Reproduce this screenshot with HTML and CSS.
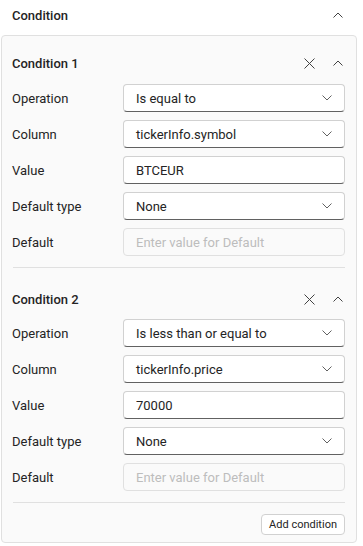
FILE: index.html
```html
<!DOCTYPE html>
<html lang="en">
<head>
  <meta charset="UTF-8" />
  <meta name="viewport" content="width=device-width, initial-scale=1.0"/>
  <title>Condition</title>
  <link rel="stylesheet" href="styles.css">
</head>
<body>
  <div class="section-header">
    <span class="section-title">Condition</span>
    <svg class="chevron-up" width="10" height="6" viewBox="0 0 10 6"><path d="M0.5 5.5 L5 1 L9.5 5.5" /></svg>
  </div>

  <div class="panel">
    <!-- CONDITION 1 -->
    <div class="condition">
      <div class="condition-head">
        <span class="condition-title">Condition 1</span>
        <div class="actions">
          <svg class="close" width="11" height="11" viewBox="0 0 11 11"><path d="M0.5 0.5 L10.5 10.5 M10.5 0.5 L0.5 10.5" /></svg>
          <svg class="chevron-up" width="10" height="6" viewBox="0 0 10 6"><path d="M0.5 5.5 L5 1 L9.5 5.5" /></svg>
        </div>
      </div>
      <div class="fields">
        <label>Operation</label>
        <div class="dropdown"><span>Is equal to</span><svg width="10" height="6" viewBox="0 0 10 6"><path d="M0.5 0.5 L5 5 L9.5 0.5" /></svg></div>
        <label>Column</label>
        <div class="dropdown"><span>tickerInfo.symbol</span><svg width="10" height="6" viewBox="0 0 10 6"><path d="M0.5 0.5 L5 5 L9.5 0.5" /></svg></div>
        <label>Value</label>
        <input class="text-input" type="text" value="BTCEUR" />
        <label>Default type</label>
        <div class="dropdown"><span>None</span><svg width="10" height="6" viewBox="0 0 10 6"><path d="M0.5 0.5 L5 5 L9.5 0.5" /></svg></div>
        <label>Default</label>
        <input class="text-input" type="text" placeholder="Enter value for Default" disabled />
      </div>
    </div>

    <div class="divider"></div>

    <!-- CONDITION 2 -->
    <div class="condition second">
      <div class="condition-head">
        <span class="condition-title">Condition 2</span>
        <div class="actions">
          <svg class="close" width="11" height="11" viewBox="0 0 11 11"><path d="M0.5 0.5 L10.5 10.5 M10.5 0.5 L0.5 10.5" /></svg>
          <svg class="chevron-up" width="10" height="6" viewBox="0 0 10 6"><path d="M0.5 5.5 L5 1 L9.5 5.5" /></svg>
        </div>
      </div>
      <div class="fields">
        <label>Operation</label>
        <div class="dropdown"><span>Is less than or equal to</span><svg width="10" height="6" viewBox="0 0 10 6"><path d="M0.5 0.5 L5 5 L9.5 0.5" /></svg></div>
        <label>Column</label>
        <div class="dropdown"><span>tickerInfo.price</span><svg width="10" height="6" viewBox="0 0 10 6"><path d="M0.5 0.5 L5 5 L9.5 0.5" /></svg></div>
        <label>Value</label>
        <input class="text-input" type="text" value="70000" />
        <label>Default type</label>
        <div class="dropdown"><span>None</span><svg width="10" height="6" viewBox="0 0 10 6"><path d="M0.5 0.5 L5 5 L9.5 0.5" /></svg></div>
        <label>Default</label>
        <input class="text-input" type="text" placeholder="Enter value for Default" disabled />
      </div>
    </div>

    <div class="divider"></div>

    <div class="panel-footer">
      <button class="add-btn">Add condition</button>
    </div>
  </div>
</body>
</html>
```

FILE: styles.css
```css
body {
  font-family: Roboto, "Noto Sans", sans-serif;
  font-size: 13px;
  color: #242424;
  background: white;
  margin: 0;
  padding: 0;
}
svg path {
  fill: none;
  stroke: #424242;
  stroke-width: 1;
}
.section-header {
  display: flex;
  align-items: center;
  justify-content: space-between;
  height: 30px;
  padding: 0 20px 0 12px;
  margin-bottom: 5px;
}
.section-title,
.condition-title {
  font-weight: 500;
}
.panel {
  width: 356px;
  box-sizing: border-box;
  margin-left: 1px;
  background: #fafafa;
  border: 1px solid #e0e0e0;
  border-radius: 4px;
  padding: 0 11px 7px;
}
.condition {
  padding-top: 11px;
}
.condition.second {
  padding-top: 15px;
}
.condition-head {
  display: flex;
  align-items: center;
  justify-content: space-between;
  height: 32px;
  margin-bottom: 5px;
}
.condition.second .condition-head {
  margin-bottom: 4px;
}
.condition-title {
  margin-left: -1px;
}
.actions {
  display: flex;
  align-items: center;
  gap: 18px;
  margin-right: 2px;
}
.fields {
  display: grid;
  grid-template-columns: 110px 1fr;
  row-gap: 8px;
  align-items: center;
}
.fields label {
  margin-left: -1px;
}
.dropdown,
.text-input {
  box-sizing: border-box;
  height: 28px;
  background: white;
  border: 1px solid #d1d1d1;
  border-bottom-color: #616161;
  border-radius: 4px;
  font: inherit;
  color: #242424;
  padding: 0 12px;
}
.dropdown {
  display: flex;
  align-items: center;
  justify-content: space-between;
}
.dropdown svg path {
  stroke: #616161;
}
.text-input {
  width: 100%;
  outline: none;
}
.text-input:disabled {
  background: #fafafa;
  border-color: #e0e0e0;
}
.text-input::placeholder {
  color: #bdbdbd;
}
.divider {
  height: 1px;
  background: #e0e0e0;
  margin-top: 11px;
}
.panel-footer {
  display: flex;
  justify-content: flex-end;
  padding-top: 11px;
}
.add-btn {
  font: inherit;
  font-size: 11px;
  height: 21px;
  padding: 0 7px;
  color: #242424;
  background: white;
  border: 1px solid #d1d1d1;
  border-radius: 4px;
  cursor: pointer;
}
```
